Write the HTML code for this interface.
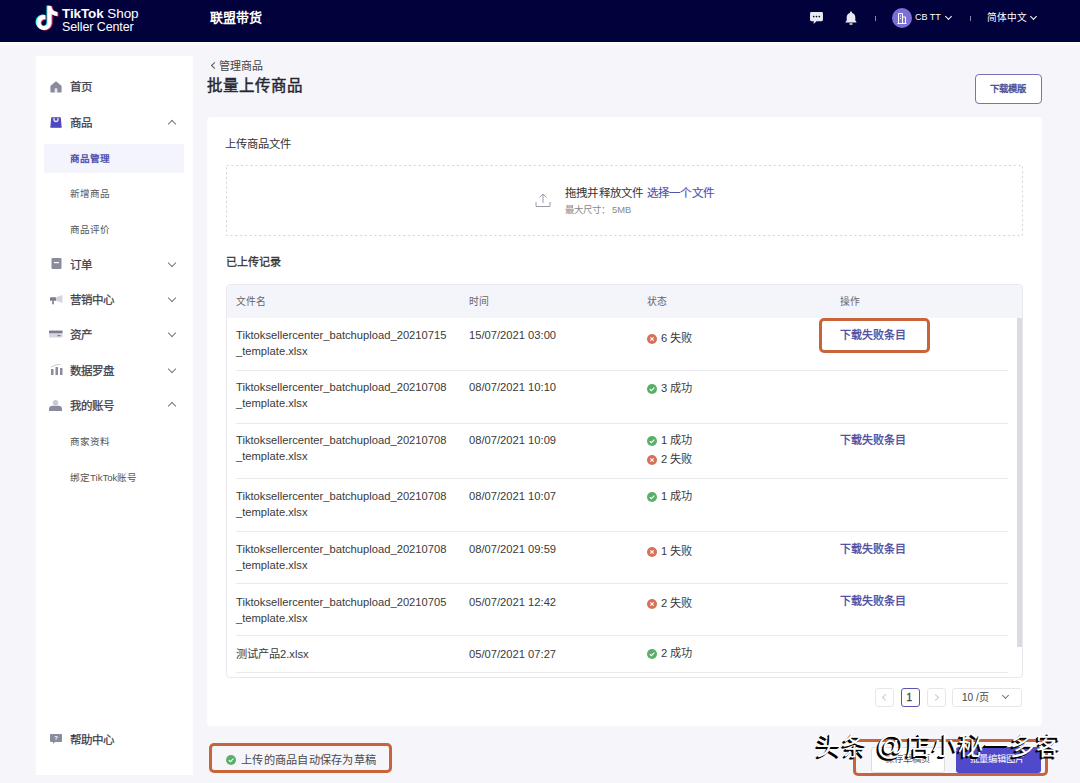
<!DOCTYPE html>
<html lang="zh-CN">
<head>
<meta charset="utf-8">
<style>
*{margin:0;padding:0;box-sizing:border-box;}
html,body{width:1080px;height:783px;overflow:hidden;}
body{background:#f5f5fa;font-family:"Liberation Sans",sans-serif;color:#333;position:relative;}
.a{position:absolute;white-space:nowrap;line-height:1;}
#hdr{position:absolute;left:0;top:0;width:1080px;height:42px;background:#01013b;}
#side{position:absolute;left:36px;top:56px;width:157px;height:719px;background:#fff;}
#card{position:absolute;left:207px;top:117px;width:835px;height:609px;background:#fff;border-radius:4px;}
#strip{position:absolute;left:0;top:42px;width:1080px;height:5px;background:linear-gradient(#fff,#f5f5fa);}
.nav{font-size:11.5px;color:#3c3c4a;-webkit-text-stroke:0.25px #3c3c4a;}
.sub{font-size:9.6px;color:#555;}
.chev{position:absolute;width:6px;height:6px;border-left:1.2px solid #777;border-top:1.2px solid #777;}
.icon{position:absolute;}
.th{font-size:9.8px;color:#666;}
.td{font-size:11.2px;color:#3a3a3a;}
.lk{font-size:11px;color:#4a489c;-webkit-text-stroke:0.3px #4a489c;}
.pg{border:1px solid #e6e6ec;border-radius:3px;background:#fff;}
.wm{font-size:25px;color:#fff;letter-spacing:1.1px;text-shadow:-1px 1px 0 #000,-2px 2px 0 #000;}
</style>
</head>
<body>
<div id="hdr">
  <!-- logo -->
  <svg class="icon" style="left:35px;top:5px" width="24" height="26" viewBox="0 0 24 26">
    <g transform="translate(0,1)">
    <path fill="#25f4ee" transform="translate(-1,-0.5)" d="M12.525.02c1.31-.02 2.61-.01 3.91-.02.08 1.530.63 3.090 1.75 4.170 1.12 1.110 2.7 1.620 4.24 1.790v4.030c-1.440-.05-2.890-.35-4.200-.97-.57-.26-1.100-.59-1.620-.93-.01 2.920.01 5.840-.02 8.750-.08 1.400-.54 2.790-1.350 3.940-1.310 1.920-3.580 3.170-5.910 3.210-1.430.08-2.860-.31-4.080-1.030-2.020-1.190-3.440-3.370-3.650-5.710-.02-.5-.03-1-.01-1.490.18-1.900 1.120-3.720 2.580-4.960 1.660-1.440 3.980-2.130 6.150-1.720.02 1.480-.04 2.960-.04 4.440-.99-.32-2.150-.23-3.020.37-.63.41-1.110 1.040-1.360 1.750-.21.51-.15 1.070-.14 1.610.24 1.640 1.820 3.020 3.500 2.870 1.120-.01 2.190-.66 2.770-1.610.19-.33.4-.67.41-1.060.1-1.790.06-3.570.07-5.360.01-4.030-.01-8.050.02-12.070z"/>
    <path fill="#fe2c55" transform="translate(1,0.5)" d="M12.525.02c1.31-.02 2.61-.01 3.91-.02.08 1.530.63 3.090 1.75 4.170 1.12 1.110 2.7 1.620 4.24 1.790v4.030c-1.440-.05-2.890-.35-4.200-.97-.57-.26-1.100-.59-1.620-.93-.01 2.920.01 5.840-.02 8.750-.08 1.400-.54 2.790-1.350 3.940-1.310 1.920-3.580 3.170-5.910 3.210-1.430.08-2.860-.31-4.080-1.030-2.020-1.190-3.440-3.370-3.650-5.710-.02-.5-.03-1-.01-1.490.18-1.900 1.120-3.720 2.580-4.960 1.660-1.440 3.980-2.130 6.150-1.720.02 1.480-.04 2.960-.04 4.440-.99-.32-2.150-.23-3.020.37-.63.41-1.110 1.040-1.360 1.750-.21.51-.15 1.070-.14 1.610.24 1.640 1.820 3.020 3.500 2.870 1.120-.01 2.190-.66 2.770-1.610.19-.33.4-.67.41-1.060.1-1.790.06-3.570.07-5.360.01-4.030-.01-8.050.02-12.070z"/>
    <path fill="#fff" d="M12.525.02c1.31-.02 2.61-.01 3.91-.02.08 1.530.63 3.090 1.75 4.170 1.12 1.110 2.7 1.620 4.24 1.790v4.030c-1.440-.05-2.890-.35-4.200-.97-.57-.26-1.100-.59-1.620-.93-.01 2.920.01 5.840-.02 8.750-.08 1.400-.54 2.790-1.350 3.940-1.310 1.920-3.580 3.170-5.910 3.210-1.430.08-2.860-.31-4.080-1.030-2.020-1.190-3.440-3.370-3.650-5.710-.02-.5-.03-1-.01-1.490.18-1.900 1.120-3.720 2.580-4.960 1.660-1.440 3.980-2.130 6.150-1.720.02 1.480-.04 2.960-.04 4.440-.99-.32-2.150-.23-3.020.37-.63.41-1.110 1.040-1.360 1.750-.21.51-.15 1.070-.14 1.610.24 1.640 1.820 3.020 3.500 2.870 1.120-.01 2.190-.66 2.770-1.610.19-.33.4-.67.41-1.060.1-1.790.06-3.570.07-5.360.01-4.030-.01-8.050.02-12.070z"/>
    </g>
  </svg>
  <div class="a" style="left:62px;top:7px;font-size:13.5px;color:#fff;letter-spacing:-0.1px"><b>TikTok</b> Shop</div>
  <div class="a" style="left:62px;top:20.5px;font-size:12.5px;color:#fff;letter-spacing:-0.1px">Seller Center</div>
  <div class="a" style="left:210px;top:11px;font-size:13px;font-weight:bold;color:#fff">联盟带货</div>

  <!-- right icons -->
  <svg class="icon" style="left:809.5px;top:12px" width="13" height="12" viewBox="0 0 14 13">
    <path fill="#e8e8f0" d="M1.5 0h11A1.5 1.5 0 0 1 14 1.5v7A1.5 1.5 0 0 1 12.5 10H7l-3 3v-3H1.5A1.5 1.5 0 0 1 0 8.5v-7A1.5 1.5 0 0 1 1.5 0z"/>
    <circle cx="4" cy="5" r="0.9" fill="#01013b"/><circle cx="7" cy="5" r="0.9" fill="#01013b"/><circle cx="10" cy="5" r="0.9" fill="#01013b"/>
  </svg>
  <svg class="icon" style="left:845px;top:11px" width="12" height="14" viewBox="0 0 12 14">
    <path fill="#e8e8f0" d="M6 0.5c0.6 0 1 .4 1 1v.4c2 .5 3.3 2.2 3.3 4.3v3.3l1.2 1.5v.6H0.5v-.6l1.2-1.5V6.2c0-2.1 1.3-3.8 3.3-4.3v-.4c0-.6.4-1 1-1z"/>
    <rect x="4.3" y="12.3" width="3.4" height="1.5" rx="0.7" fill="#e8e8f0"/>
  </svg>
  <div class="icon" style="left:875px;top:16px;width:1px;height:5px;background:#8888a8"></div>
  <div class="icon" style="left:892px;top:8px;width:20px;height:20px;border-radius:50%;background:#7c70d4"></div>
  <svg class="icon" style="left:897px;top:12px" width="10" height="12" viewBox="0 0 10 12">
    <path fill="none" stroke="#fff" stroke-width="1" d="M1.5 11.5V1.5h4v10M5.5 5h3v6.5M0.5 11.5h9M3 4h1M3 6.5h1"/>
  </svg>
  <div class="a" style="left:915px;top:12.5px;font-size:9px;color:#fff">CB TT</div>
  <div class="chev" style="left:946px;top:14px;transform:rotate(225deg);border-color:#fff;width:5px;height:5px"></div>
  <div class="icon" style="left:970px;top:16px;width:1px;height:5px;background:#8888a8"></div>
  <div class="a" style="left:987px;top:13px;font-size:9.7px;color:#fff">简体中文</div>
  <div class="chev" style="left:1031px;top:14px;transform:rotate(225deg);border-color:#fff;width:5px;height:5px"></div>
</div>

<div id="strip"></div>
<div id="side">
</div>
<!-- sidebar content (absolute page coords) -->
<svg class="icon" style="left:50px;top:80.5px" width="12" height="12" viewBox="0 0 12 12"><path fill="#8a8b9c" stroke="#8a8b9c" stroke-width="1.2" stroke-linejoin="round" d="M6 1L11 5.2V11H7.6V8.6a1.6 1.6 0 0 0-3.2 0V11H1V5.2z"/><path fill="#e6e7f0" d="M4.6 11.4V8.7a1.4 1.4 0 0 1 2.8 0v2.7z"/></svg>
<div class="a nav" style="left:70px;top:82px">首页</div>
<svg class="icon" style="left:50px;top:116.5px" width="12" height="11" viewBox="0 0 12 11"><path fill="#5048c0" stroke="#5048c0" stroke-width="1.2" stroke-linejoin="round" d="M1.8 0.8h8.4l0.9 9.4H0.9z"/><path fill="none" stroke="#e8e6ff" stroke-width="1.3" stroke-linecap="round" d="M4 1.3v1.2a2 2 0 0 0 4 0V1.3"/></svg>
<div class="a nav" style="left:70px;top:118px">商品</div>
<div class="chev" style="left:169px;top:121px;transform:rotate(45deg)"></div>
<div class="icon" style="left:44px;top:143.5px;width:140px;height:29px;background:#f3f4fc;border-radius:2px"></div>
<div class="a sub" style="left:70px;top:153.5px;color:#5550b0;font-weight:bold">商品管理</div>
<div class="a sub" style="left:70px;top:188.5px">新增商品</div>
<div class="a sub" style="left:70px;top:224.5px">商品评价</div>
<svg class="icon" style="left:51px;top:258px" width="11" height="11" viewBox="0 0 11 11"><rect x="0.5" y="0" width="10" height="11" rx="1.2" fill="#8a8b9c"/><rect x="3" y="4" width="5" height="1.2" fill="#fff"/></svg>
<div class="a nav" style="left:70px;top:260px">订单</div>
<div class="chev" style="left:169px;top:260px;transform:rotate(225deg)"></div>
<svg class="icon" style="left:49.5px;top:294.5px" width="13" height="10" viewBox="0 0 13 10"><path fill="#d5d5e0" d="M6 2.2L12.5 0v8L6 5.8z"/><rect x="0" y="2.2" width="6" height="3.6" rx="0.6" fill="#7c7d90"/><rect x="2.2" y="5.5" width="1.6" height="3.8" fill="#7c7d90"/></svg>
<div class="a nav" style="left:70px;top:295px">营销中心</div>
<div class="chev" style="left:169px;top:295px;transform:rotate(225deg)"></div>
<svg class="icon" style="left:49px;top:330px" width="14" height="8" viewBox="0 0 14 8"><rect x="0" y="0" width="13.5" height="7.5" rx="0.8" fill="#d5d6e0"/><rect x="0" y="0.8" width="13.5" height="2.4" fill="#7c7d90"/><rect x="8.5" y="5" width="3" height="1.2" fill="#7c7d90"/></svg>
<div class="a nav" style="left:70px;top:330px">资产</div>
<div class="chev" style="left:169px;top:330px;transform:rotate(225deg)"></div>
<svg class="icon" style="left:50.5px;top:364px" width="12" height="11" viewBox="0 0 12 11"><rect x="0" y="5" width="2.5" height="6" fill="#8a8b9c"/><rect x="4.5" y="3" width="2.5" height="8" fill="#8a8b9c"/><rect x="9" y="4" width="2.5" height="7" fill="#8a8b9c"/><path d="M0 3L5 1L10 0" stroke="#c8c8d4" stroke-width="1" fill="none"/></svg>
<div class="a nav" style="left:70px;top:366px">数据罗盘</div>
<div class="chev" style="left:169px;top:366px;transform:rotate(225deg)"></div>
<svg class="icon" style="left:49px;top:400px" width="13" height="11" viewBox="0 0 13 11"><circle cx="6.5" cy="2.7" r="2.7" fill="#c8c8d4"/><path fill="#8a8b9c" d="M0 11v-2.5c0-1.5 1.5-2.8 3.5-2.8h6c2 0 3.5 1.3 3.5 2.8V11z"/></svg>
<div class="a nav" style="left:70px;top:401px">我的账号</div>
<div class="chev" style="left:169px;top:403px;transform:rotate(45deg)"></div>
<div class="a sub" style="left:70px;top:436.5px">商家资料</div>
<div class="a sub" style="left:70px;top:472.5px">绑定TikTok账号</div>
<svg class="icon" style="left:50px;top:734px" width="12" height="10" viewBox="0 0 12 10"><path fill="#8a8b9c" d="M1 0h10a1 1 0 0 1 1 1v6a1 1 0 0 1-1 1H5l-2 2V8H1a1 1 0 0 1-1-1V1a1 1 0 0 1 1-1z"/><text x="6" y="6.3" font-size="6" text-anchor="middle" fill="#fff" font-family="Liberation Sans" font-weight="bold">?</text></svg>
<div class="a nav" style="left:70px;top:735px">帮助中心</div>
<div id="card"></div>
<!-- breadcrumb / title -->
<div class="chev" style="left:212px;top:63px;transform:rotate(-45deg);width:5px;height:5px;border-color:#555"></div>
<div class="a" style="left:219px;top:61px;font-size:11px;color:#444">管理商品</div>
<div class="a" style="left:206.5px;top:77.8px;font-size:15.5px;letter-spacing:0.2px;color:#262630;-webkit-text-stroke:0.45px #262630">批量上传商品</div>
<div class="icon" style="left:975px;top:74px;width:67px;height:30px;border:1.5px solid #7674b4;border-radius:4px;background:#fff"></div>
<div class="a" style="left:990px;top:84px;font-size:9.4px;color:#4e4c96;-webkit-text-stroke:0.4px #4e4c96">下载模版</div>

<div class="a" style="left:225px;top:138.5px;font-size:11.3px;color:#333">上传商品文件</div>
<svg class="icon" style="left:225px;top:164px" width="799" height="73" viewBox="0 0 799 73"><rect x="1.5" y="1.5" width="796" height="70" fill="none" stroke="#d6d6de" stroke-width="1" stroke-dasharray="2.2 2.6"/></svg>
<svg class="icon" style="left:535px;top:192px" width="16" height="16" viewBox="0 0 16 16"><path fill="none" stroke="#9a9aa8" stroke-width="1" d="M8 11V2M4.5 5.5L8 2l3.5 3.5M1 10v4.5h14V10"/></svg>
<div class="a" style="left:565px;top:187.5px;font-size:11.5px;letter-spacing:0.2px;color:#333">拖拽并释放文件 <span style="color:#5450b0;-webkit-text-stroke:0.15px #5450b0">选择一个文件</span></div>
<div class="a" style="left:565px;top:204.5px;font-size:9.4px;color:#888">最大尺寸：<span style="margin-left:2px">5MB</span></div>

<div class="a" style="left:226px;top:257px;font-size:11px;color:#333;-webkit-text-stroke:0.3px #333">已上传记录</div>

<!-- table -->
<div class="icon" style="left:226px;top:284px;width:797px;height:394px;border:1px solid #e8e8ee;border-radius:4px;overflow:hidden">
  <div class="icon" style="left:0;top:0;width:795px;height:32.5px;background:#f4f4fb"></div>
</div>
<div class="a th" style="left:236px;top:297px">文件名</div>
<div class="a th" style="left:469px;top:297px">时间</div>
<div class="a th" style="left:647px;top:297px">状态</div>
<div class="a th" style="left:840px;top:297px">操作</div>
<div class="icon" style="left:1017px;top:318px;width:5px;height:329px;background:#d9dbdf"></div>
<div class="a td" style="left:236px;top:330px">Tiktoksellercenter_batchupload_20210715</div>
<div class="a td" style="left:236px;top:346px">_template.xlsx</div>
<div class="a td" style="left:469px;top:330px">15/07/2021 03:00</div>
<svg class="icon" style="left:647px;top:334px" width="10" height="10" viewBox="0 0 10 10"><circle cx="5" cy="5" r="5" fill="#d8705a"/><path d="M3.3 3.3l3.4 3.4M6.7 3.3L3.3 6.7" stroke="#fff" stroke-width="1.1"/></svg>
<div class="a td" style="left:661px;top:333px">6 失败</div>
<div class="a lk" style="left:840px;top:330px">下载失败条目</div>
<div class="icon" style="left:236px;top:370px;width:772px;height:1px;background:#e8e8ee"></div>
<div class="a td" style="left:236px;top:382px">Tiktoksellercenter_batchupload_20210708</div>
<div class="a td" style="left:236px;top:398px">_template.xlsx</div>
<div class="a td" style="left:469px;top:382px">08/07/2021 10:10</div>
<svg class="icon" style="left:647px;top:384px" width="10" height="10" viewBox="0 0 10 10"><circle cx="5" cy="5" r="5" fill="#58b068"/><path d="M2.8 5.1l1.6 1.6 3-3" stroke="#fff" stroke-width="1.2" fill="none"/></svg>
<div class="a td" style="left:661px;top:383px">3 成功</div>
<div class="icon" style="left:236px;top:423px;width:772px;height:1px;background:#e8e8ee"></div>
<div class="a td" style="left:236px;top:435px">Tiktoksellercenter_batchupload_20210708</div>
<div class="a td" style="left:236px;top:451px">_template.xlsx</div>
<div class="a td" style="left:469px;top:435px">08/07/2021 10:09</div>
<svg class="icon" style="left:647px;top:436px" width="10" height="10" viewBox="0 0 10 10"><circle cx="5" cy="5" r="5" fill="#58b068"/><path d="M2.8 5.1l1.6 1.6 3-3" stroke="#fff" stroke-width="1.2" fill="none"/></svg>
<div class="a td" style="left:661px;top:435px">1 成功</div>
<svg class="icon" style="left:647px;top:455px" width="10" height="10" viewBox="0 0 10 10"><circle cx="5" cy="5" r="5" fill="#d8705a"/><path d="M3.3 3.3l3.4 3.4M6.7 3.3L3.3 6.7" stroke="#fff" stroke-width="1.1"/></svg>
<div class="a td" style="left:661px;top:454px">2 失败</div>
<div class="a lk" style="left:840px;top:435px">下载失败条目</div>
<div class="icon" style="left:236px;top:478px;width:772px;height:1px;background:#e8e8ee"></div>
<div class="a td" style="left:236px;top:491px">Tiktoksellercenter_batchupload_20210708</div>
<div class="a td" style="left:236px;top:507px">_template.xlsx</div>
<div class="a td" style="left:469px;top:491px">08/07/2021 10:07</div>
<svg class="icon" style="left:647px;top:492px" width="10" height="10" viewBox="0 0 10 10"><circle cx="5" cy="5" r="5" fill="#58b068"/><path d="M2.8 5.1l1.6 1.6 3-3" stroke="#fff" stroke-width="1.2" fill="none"/></svg>
<div class="a td" style="left:661px;top:491px">1 成功</div>
<div class="icon" style="left:236px;top:531px;width:772px;height:1px;background:#e8e8ee"></div>
<div class="a td" style="left:236px;top:544px">Tiktoksellercenter_batchupload_20210708</div>
<div class="a td" style="left:236px;top:560px">_template.xlsx</div>
<div class="a td" style="left:469px;top:544px">08/07/2021 09:59</div>
<svg class="icon" style="left:647px;top:547px" width="10" height="10" viewBox="0 0 10 10"><circle cx="5" cy="5" r="5" fill="#d8705a"/><path d="M3.3 3.3l3.4 3.4M6.7 3.3L3.3 6.7" stroke="#fff" stroke-width="1.1"/></svg>
<div class="a td" style="left:661px;top:546px">1 失败</div>
<div class="a lk" style="left:840px;top:544px">下载失败条目</div>
<div class="icon" style="left:236px;top:583px;width:772px;height:1px;background:#e8e8ee"></div>
<div class="a td" style="left:236px;top:596.5px">Tiktoksellercenter_batchupload_20210705</div>
<div class="a td" style="left:236px;top:612.5px">_template.xlsx</div>
<div class="a td" style="left:469px;top:596.5px">05/07/2021 12:42</div>
<svg class="icon" style="left:647px;top:599px" width="10" height="10" viewBox="0 0 10 10"><circle cx="5" cy="5" r="5" fill="#d8705a"/><path d="M3.3 3.3l3.4 3.4M6.7 3.3L3.3 6.7" stroke="#fff" stroke-width="1.1"/></svg>
<div class="a td" style="left:661px;top:598px">2 失败</div>
<div class="a lk" style="left:840px;top:596px">下载失败条目</div>
<div class="icon" style="left:236px;top:635px;width:772px;height:1px;background:#e8e8ee"></div>
<div class="a td" style="left:236px;top:648.5px">测试产品2.xlsx</div>
<div class="a td" style="left:469px;top:648.5px">05/07/2021 07:27</div>
<svg class="icon" style="left:647px;top:649px" width="10" height="10" viewBox="0 0 10 10"><circle cx="5" cy="5" r="5" fill="#58b068"/><path d="M2.8 5.1l1.6 1.6 3-3" stroke="#fff" stroke-width="1.2" fill="none"/></svg>
<div class="a td" style="left:661px;top:648px">2 成功</div>
<div class="icon" style="left:236px;top:672px;width:772px;height:1px;background:#e8e8ee"></div>

<!-- pagination -->
<div class="icon pg" style="left:875px;top:688px;width:19px;height:19px"></div>
<div class="chev" style="left:883px;top:695px;transform:rotate(-45deg);width:5px;height:5px;border-color:#ccc"></div>
<div class="icon pg" style="left:901px;top:688px;width:19px;height:19px;border-color:#5a56b0;border-width:1.5px"></div>
<div class="a" style="left:906.5px;top:693px;font-size:10px;color:#444;-webkit-text-stroke:0.3px #444">1</div>
<div class="icon pg" style="left:927px;top:688px;width:19px;height:19px"></div>
<div class="chev" style="left:933px;top:695px;transform:rotate(135deg);width:5px;height:5px;border-color:#ccc"></div>
<div class="icon pg" style="left:952px;top:688px;width:70px;height:19px"></div>
<div class="a" style="left:962px;top:693px;font-size:10px;color:#444">10 /页</div>
<div class="chev" style="left:1003px;top:693px;transform:rotate(225deg);width:5px;height:5px;border-color:#777"></div>

<!-- bottom -->
<div class="icon" style="left:209px;top:743px;width:183px;height:30px;border:3px solid #c8643c;border-radius:5px"></div>
<svg class="icon" style="left:226px;top:755px" width="10" height="10" viewBox="0 0 10 10"><circle cx="5" cy="5" r="5" fill="#58b068"/><path d="M2.8 5.1l1.6 1.6 3-3" stroke="#fff" stroke-width="1.2" fill="none"/></svg>
<div class="a" style="left:241px;top:754.5px;font-size:11.2px;letter-spacing:0.25px;color:#4a4a4a">上传的商品自动保存为草稿</div>

<div class="icon" style="left:871px;top:747px;width:74px;height:26px;background:#fff;border:1px solid #ddd;border-radius:3px"></div>
<div class="a" style="left:885px;top:755px;font-size:9.3px;color:#555">保存草稿页</div>
<div class="icon" style="left:956px;top:747px;width:85px;height:26px;background:#5049cc;border-radius:3px"></div>
<div class="a" style="left:970px;top:755px;font-size:9.3px;color:#fff">批量编辑图片</div>
<div class="icon" style="left:853px;top:739px;width:195px;height:37px;border:3px solid #c8643c;border-radius:5px"></div>
<div class="a wm" style="left:816px;top:731.5px">头条 <span style="font-size:28px;letter-spacing:0;margin-right:1px">@</span>店小秘一多客</div>

<!-- row1 annotation -->
<div class="icon" style="left:819px;top:318px;width:111px;height:35px;border:3px solid #c8643c;border-radius:5px"></div>
</body>
</html>
